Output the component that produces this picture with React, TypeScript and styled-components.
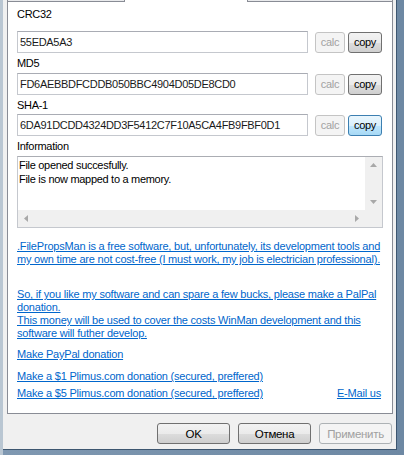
import React from 'react'
import styled, { createGlobalStyle, css } from 'styled-components'

const GlobalStyle = createGlobalStyle`
  html, body {
    margin: 0;
    padding: 0;
    background: #6f8aa5;
  }
  body {
    font-family: 'Liberation Sans', Arial, sans-serif;
    font-size: 11px;
    letter-spacing: -0.3px;
    color: #000;
  }
`

const Window = styled.div`
  width: 404px;
  height: 455px;
  box-sizing: border-box;
  padding: 0 7px 5px 3px;
  background: linear-gradient(to right, #b9c6d2 0, #b9c6d2 3px, #7f98b1 3px, #6d88a3 100%);
  overflow: hidden;
`

const Dialog = styled.div`
  height: 450px;
  box-sizing: border-box;
  background: #f0f0f0;
  border-right: 1px solid #3d5670;
  border-bottom: 1px solid #3d5670;
  padding: 0 3px 0 4px;
  display: flex;
  flex-direction: column;
`

const TabStrip = styled.div`
  display: flex;
  height: 2px;
`

const Tab = styled.div<{ w: number; first?: boolean }>`
  width: ${({ w }) => w}px;
  box-sizing: border-box;
  background: #e9eaec;
  border-bottom: 1px solid #898c95;
  ${({ first }) =>
    first
      ? css`
          border-left: 1px solid #898c95;
        `
      : css`
          border-right: 1px solid #898c95;
        `}
`

const SelectedTab = styled.div`
  width: 124px;
  box-sizing: border-box;
  background: #fff;
  border-left: 1px solid #898c95;
  border-right: 1px solid #898c95;
`

const Panel = styled.div`
  height: 412px;
  box-sizing: border-box;
  background: #fff;
  border: 1px solid #898c95;
  border-top: none;
  padding: 5px 9px 0 9px;
  display: flex;
  flex-direction: column;
`

const Label = styled.div<{ mt?: number }>`
  height: 15px;
  line-height: 15px;
  margin-top: ${({ mt }) => mt ?? 0}px;
  font-size: 11px;
  color: #000;
`

const Row = styled.div<{ mt: number }>`
  display: flex;
  align-items: center;
  height: 22px;
  margin-top: ${({ mt }) => mt}px;
  margin-right: 1px;
`

const HashBox = styled.div`
  flex: 1;
  height: 22px;
  box-sizing: border-box;
  border: 1px solid #c5c8ce;
  border-top-color: #a9acb4;
  background: #fff;
  padding-left: 2px;
  line-height: 20px;
  font-size: 11px;
  letter-spacing: -0.3px;
  color: #1a1a1a;
  white-space: nowrap;
  overflow: hidden;
`

const SmallButton = styled.div<{ kind: 'disabled' | 'normal' | 'hot' }>`
  height: 21px;
  box-sizing: border-box;
  border-radius: 3px;
  display: flex;
  align-items: center;
  justify-content: center;
  font-size: 11px;
  ${({ kind }) =>
    kind === 'disabled'
      ? css`
          width: 30px;
          margin-left: 7px;
          border: 1px solid #c4c4c4;
          background: #f4f4f4;
          color: #a2a2a2;
        `
      : kind === 'normal'
      ? css`
          width: 34px;
          margin-left: 3px;
          border: 1px solid #707070;
          background: linear-gradient(#f2f2f2 0%, #ebebeb 50%, #dddddd 51%, #cfcfcf 100%);
          color: #000;
        `
      : css`
          width: 34px;
          margin-left: 3px;
          border: 1px solid #3c7fb1;
          background: linear-gradient(#eaf6fd 0%, #d9f0fc 50%, #bee6fd 51%, #a7d9f5 100%);
          color: #000;
        `}
`

const InfoBox = styled.div`
  margin-top: 2px;
  height: 72px;
  box-sizing: border-box;
  border: 1px solid #c5c8ce;
  border-top-color: #abadb3;
  display: flex;
  flex-direction: column;
`

const InfoBody = styled.div`
  flex: 1;
  display: flex;
`

const InfoText = styled.div`
  flex: 1;
  padding: 1px 0 0 1px;
  line-height: 14px;
  font-size: 11px;
`

const VScroll = styled.div`
  width: 17px;
  background: #f0f0f0;
  display: flex;
  flex-direction: column;
  justify-content: space-between;
  align-items: center;
  padding: 6px 0 6px;
`

const HScrollRow = styled.div`
  display: flex;
  height: 17px;
`

const HScroll = styled.div`
  flex: 1;
  background: #f0f0f0;
  display: flex;
  justify-content: space-between;
  align-items: center;
  padding: 0 6px 0 6px;
`

const Corner = styled.div`
  width: 17px;
  background: #f0f0f0;
`

const Arrow = ({ dir }: { dir: 'up' | 'down' | 'left' | 'right' }) => {
  const pts = {
    up: '0,4 3.5,0 7,4',
    down: '0,0 3.5,4 7,0',
    left: '4,0 0,3.5 4,7',
    right: '0,0 4,3.5 0,7',
  }[dir]
  const vertical = dir === 'up' || dir === 'down'
  return (
    <svg width={vertical ? 7 : 4} height={vertical ? 4 : 7} viewBox={vertical ? '0 0 7 4' : '0 0 4 7'}>
      <polygon points={pts} fill="#a8a8a8" />
    </svg>
  )
}

const LinkBlock = styled.div<{ mt: number }>`
  margin-top: ${({ mt }) => mt}px;
  line-height: 13px;
  font-size: 11px;
  letter-spacing: -0.2px;
  white-space: nowrap;
`

const LinkRow = styled(LinkBlock)`
  display: flex;
  justify-content: space-between;
  padding-right: 2px;
`

const Link = styled.a`
  color: #0066cc;
  text-decoration: underline;
  cursor: pointer;
`

const ButtonBar = styled.div`
  display: flex;
  justify-content: flex-end;
  gap: 8px;
  padding: 9px 1px 0 0;
`

const DialogButton = styled.div<{ disabled?: boolean }>`
  width: 73px;
  height: 21px;
  box-sizing: border-box;
  border-radius: 3px;
  display: flex;
  align-items: center;
  justify-content: center;
  font-size: 11.5px;
  ${({ disabled }) =>
    disabled
      ? css`
          border: 1px solid #adb2b5;
          background: #f4f4f4;
          color: #a0a0a0;
        `
      : css`
          border: 1px solid #707070;
          background: linear-gradient(#f2f2f2 0%, #ebebeb 50%, #dddddd 51%, #cfcfcf 100%);
          color: #000;
        `}
`

const hashes = [
  { label: 'CRC32', value: '55EDA5A3', hot: false, labelGap: 0, rowGap: 9 },
  { label: 'MD5', value: 'FD6AEBBDFCDDB050BBC4904D05DE8CD0', hot: false, labelGap: 3, rowGap: 2 },
  { label: 'SHA-1', value: '6DA91DCDD4324DD3F5412C7F10A5CA4FB9FBF0D1', hot: true, labelGap: 3, rowGap: 1 },
]

export default function App() {
  return (
    <>
      <GlobalStyle />
      <Window>
        <Dialog>
          <TabStrip>
            <Tab w={117} first />
            <SelectedTab />
            <Tab w={145} />
          </TabStrip>
          <Panel>
            {hashes.map(h => (
              <React.Fragment key={h.label}>
                <Label mt={h.labelGap}>{h.label}</Label>
                <Row mt={h.rowGap}>
                  <HashBox>{h.value}</HashBox>
                  <SmallButton kind="disabled">calc</SmallButton>
                  <SmallButton kind={h.hot ? 'hot' : 'normal'}>copy</SmallButton>
                </Row>
              </React.Fragment>
            ))}
            <Label mt={3}>Information</Label>
            <InfoBox>
              <InfoBody>
                <InfoText>
                  File opened succesfully.
                  <br />
                  File is now mapped to a memory.
                </InfoText>
                <VScroll>
                  <Arrow dir="up" />
                  <Arrow dir="down" />
                </VScroll>
              </InfoBody>
              <HScrollRow>
                <HScroll>
                  <Arrow dir="left" />
                  <Arrow dir="right" />
                </HScroll>
                <Corner />
              </HScrollRow>
            </InfoBox>
            <LinkBlock mt={12}>
              <Link>
                .FilePropsMan is a free software, but, unfortunately, its development tools and
                <br />
                my own time are not cost-free (I must work, my job is electrician professional).
              </Link>
            </LinkBlock>
            <LinkBlock mt={22}>
              <Link>
                So, if you like my software and can spare a few bucks, please make a PalPal
                <br />
                donation.
                <br />
                This money will be used to cover the costs WinMan development and this
                <br />
                software will futher develop.
              </Link>
            </LinkBlock>
            <LinkBlock mt={8}>
              <Link>Make PayPal donation</Link>
            </LinkBlock>
            <LinkBlock mt={9}>
              <Link>Make a $1 Plimus.com donation (secured, preffered)</Link>
            </LinkBlock>
            <LinkRow mt={4}>
              <Link>Make a $5 Plimus.com donation (secured, preffered)</Link>
              <Link>E-Mail us</Link>
            </LinkRow>
          </Panel>
          <ButtonBar>
            <DialogButton>OK</DialogButton>
            <DialogButton>Отмена</DialogButton>
            <DialogButton disabled>Применить</DialogButton>
          </ButtonBar>
        </Dialog>
      </Window>
    </>
  )
}
